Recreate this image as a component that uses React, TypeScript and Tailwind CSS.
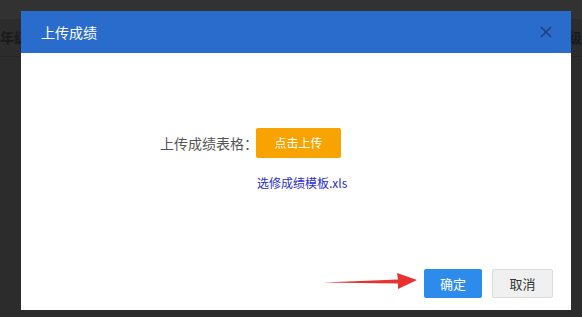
import React from "react"

export default function App() {
  return (
    <div
      className="relative w-[582px] h-[317px] overflow-hidden bg-[#2c2c2c]"
      style={{ fontFamily: '"Noto Sans CJK SC", "Noto Sans", sans-serif' }}
    >
      {/* dimmed page behind the dialog */}
      <div className="h-[19px] bg-[#323232]" />
      <div className="flex items-center justify-between h-[38px] border-b border-[#262626] text-[14px] font-bold text-[#1a1a1a]">
        <span>年级</span>
        <span>级</span>
      </div>

      {/* dialog */}
      <div className="absolute left-[21px] top-[11px] w-[550px] h-[299px] bg-white flex flex-col">
        <div className="h-[42px] bg-[#2a6ccb] flex items-center justify-between pl-[20px] pr-[19px]">
          <span className="text-[14px] text-white">上传成绩</span>
          <svg width="12" height="12" viewBox="0 0 12 12" className="text-[#1b3d78]">
            <path d="M1 1L11 11M11 1L1 11" stroke="currentColor" strokeWidth="1.4" />
          </svg>
        </div>

        <div className="flex-1 flex flex-col pl-[139px] pt-[75px]">
          <div className="flex items-center h-[30px]">
            <span className="text-[14px] text-[#555]">上传成绩表格：</span>
            <button className="-ml-[2px] w-[85px] h-[30px] rounded-[2px] bg-[#f9a300] text-white text-[12px]">
              点击上传
            </button>
          </div>
          <a className="mt-[15px] ml-[97px] text-[12px] text-[#2b2bd0] leading-[20px]">选修成绩模板.xls</a>
        </div>

        <div className="flex items-center justify-end gap-[10px] pr-[18px] pb-[12px]">
          <button className="w-[58px] h-[29px] rounded-[2px] bg-[#2d8ceb] text-white text-[13px]">确定</button>
          <button className="w-[61px] h-[29px] rounded-[2px] bg-[#f0f0f0] border border-[#dcdcdc] text-[#333] text-[13px]">
            取消
          </button>
        </div>
      </div>

      {/* red arrow pointing at the confirm button */}
      <svg className="absolute left-[322px] top-[270px]" width="96" height="22" viewBox="0 0 96 22">
        <path d="M1 12.5L76 9.5L75 3L95 10L76 19L76 13.5Z" fill="#e8322e" />
      </svg>
    </div>
  )
}
